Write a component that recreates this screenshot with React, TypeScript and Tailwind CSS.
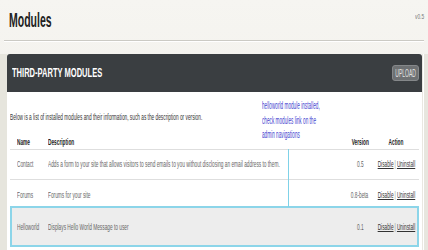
const sqL = "inline-block origin-left scale-x-[0.53] whitespace-nowrap";
const sqC = "inline-block origin-center scale-x-[0.53] whitespace-nowrap";
const cols = "grid grid-cols-[31px_minmax(0,1fr)_38px_34px] items-center";

type Mod = { name: string; description: string; version: string };

const modules: Mod[] = [
  {
    name: "Contact",
    description:
      "Adds a form to your site that allows visitors to send emails to you without disclosing an email address to them.",
    version: "0.5",
  },
  { name: "Forums", description: "Forums for your site", version: "0.8-beta" },
];

function Actions() {
  return (
    <span className={sqC}>
      <a className="underline text-[#333]">Disable</a>
      <span className="text-[#888] mx-[2px]">|</span>
      <a className="underline text-[#333]">Uninstall</a>
    </span>
  );
}

function Row({ m, className }: { m: Mod; className: string }) {
  return (
    <div className={`${cols} text-[9px] text-[#666] ${className}`}>
      <span className="min-w-0">
        <span className={sqL}>{m.name}</span>
      </span>
      <span className="min-w-0">
        <span className={sqL}>{m.description}</span>
      </span>
      <span className="flex justify-center">
        <span className={sqC}>{m.version}</span>
      </span>
      <span className="flex justify-center">
        <Actions />
      </span>
    </div>
  );
}

export default function App() {
  return (
    <div
      className="w-[428px] h-[250px] overflow-hidden bg-gradient-to-b from-[#f6f5f1] to-[#eeede7]"
      style={{ fontFamily: '"Liberation Sans", Arial, sans-serif' }}
    >
      <div className="flex items-start justify-between pl-[9px] pr-[4px] pt-[9px] h-[40px]">
        <h1 className="text-[21px] leading-[21px] font-bold text-[#222]">
          <span className="inline-block origin-left scale-x-[0.5] whitespace-nowrap">Modules</span>
        </h1>
        <span className="text-[8px] text-[#777] mt-[2px]">
          <span className="inline-block origin-right scale-x-[0.6]">v0.5</span>
        </span>
      </div>
      <div className="mx-[4px] border-t border-[#cbcac4] border-b border-b-white" />

      <div className="flex mt-[12px] h-[196px]">
        <div className="w-[7px] shrink-0 bg-[#e6e5dd]" />
        <div className="flex-1 min-w-0 flex flex-col">
          <div className="h-[38px] bg-[#3a3e41] rounded-t-[3px] flex items-center justify-between pl-[5px] pr-[3px]">
            <h2 className="min-w-0 w-[100px] text-[13px] font-bold text-white">
              <span className="inline-block origin-left scale-x-[0.58] whitespace-nowrap">THIRD-PARTY MODULES</span>
            </h2>
            <button className="w-[27px] h-[16px] shrink-0 rounded-[3px] bg-[#6e7173] border border-[#85888a] flex items-center justify-center text-[10px] text-[#e4e4e4]">
              <span className="inline-block origin-center scale-x-[0.5] whitespace-nowrap">UPLOAD</span>
            </button>
          </div>

          <div className="relative flex-1 bg-white px-[3px]">
            <p className="pt-[20px] text-[9px] leading-[10px] text-[#333] w-[300px]">
              <span className={sqL}>
                Below is a list of installed modules and their information, such as the description or version.
              </span>
            </p>

            <div className="absolute left-[255px] top-[7px] text-[10px] leading-[14.5px] text-[#4343cf]">
              <p><span className="inline-block origin-left scale-x-[0.47] whitespace-nowrap">helloworld module installed,</span></p>
              <p><span className="inline-block origin-left scale-x-[0.47] whitespace-nowrap">check modules link on the</span></p>
              <p><span className="inline-block origin-left scale-x-[0.47] whitespace-nowrap">admin navigations</span></p>
            </div>

            <div className={`${cols} mt-[14px] h-[14px] pl-[7px] pr-[6px] border-b border-[#dedede] text-[9px] font-bold text-[#222]`}>
              <span className="min-w-0">
                <span className={sqL}>Name</span>
              </span>
              <span className="min-w-0">
                <span className={sqL}>Description</span>
              </span>
              <span className="flex justify-center">
                <span className={sqC}>Version</span>
              </span>
              <span className="flex justify-center">
                <span className={sqC}>Action</span>
              </span>
            </div>

            <Row m={modules[0]} className="h-[30px] pl-[7px] pr-[6px] border-b border-[#dedede]" />
            <Row m={modules[1]} className="h-[26px] pt-[5px] pl-[7px] pr-[6px]" />

            <div className="border-2 border-[#8cd5e9] bg-[#ededed] h-[41px]">
              <Row
                m={{ name: "Helloworld", description: "Displays Hello World Message to user", version: "0.1" }}
                className="h-full pt-[3px] pl-[5px] pr-[4px]"
              />
            </div>

            <div className="absolute left-[281px] top-[57px] w-px h-[58px] bg-[#7fd2e8]" />
          </div>
        </div>
        <div className="w-[6px] shrink-0 flex">
          <div className="w-px bg-[#e9e8e1]" />
          <div className="w-px bg-white" />
          <div className="flex-1 bg-[#e7e6de]" />
        </div>
      </div>
    </div>
  );
}
